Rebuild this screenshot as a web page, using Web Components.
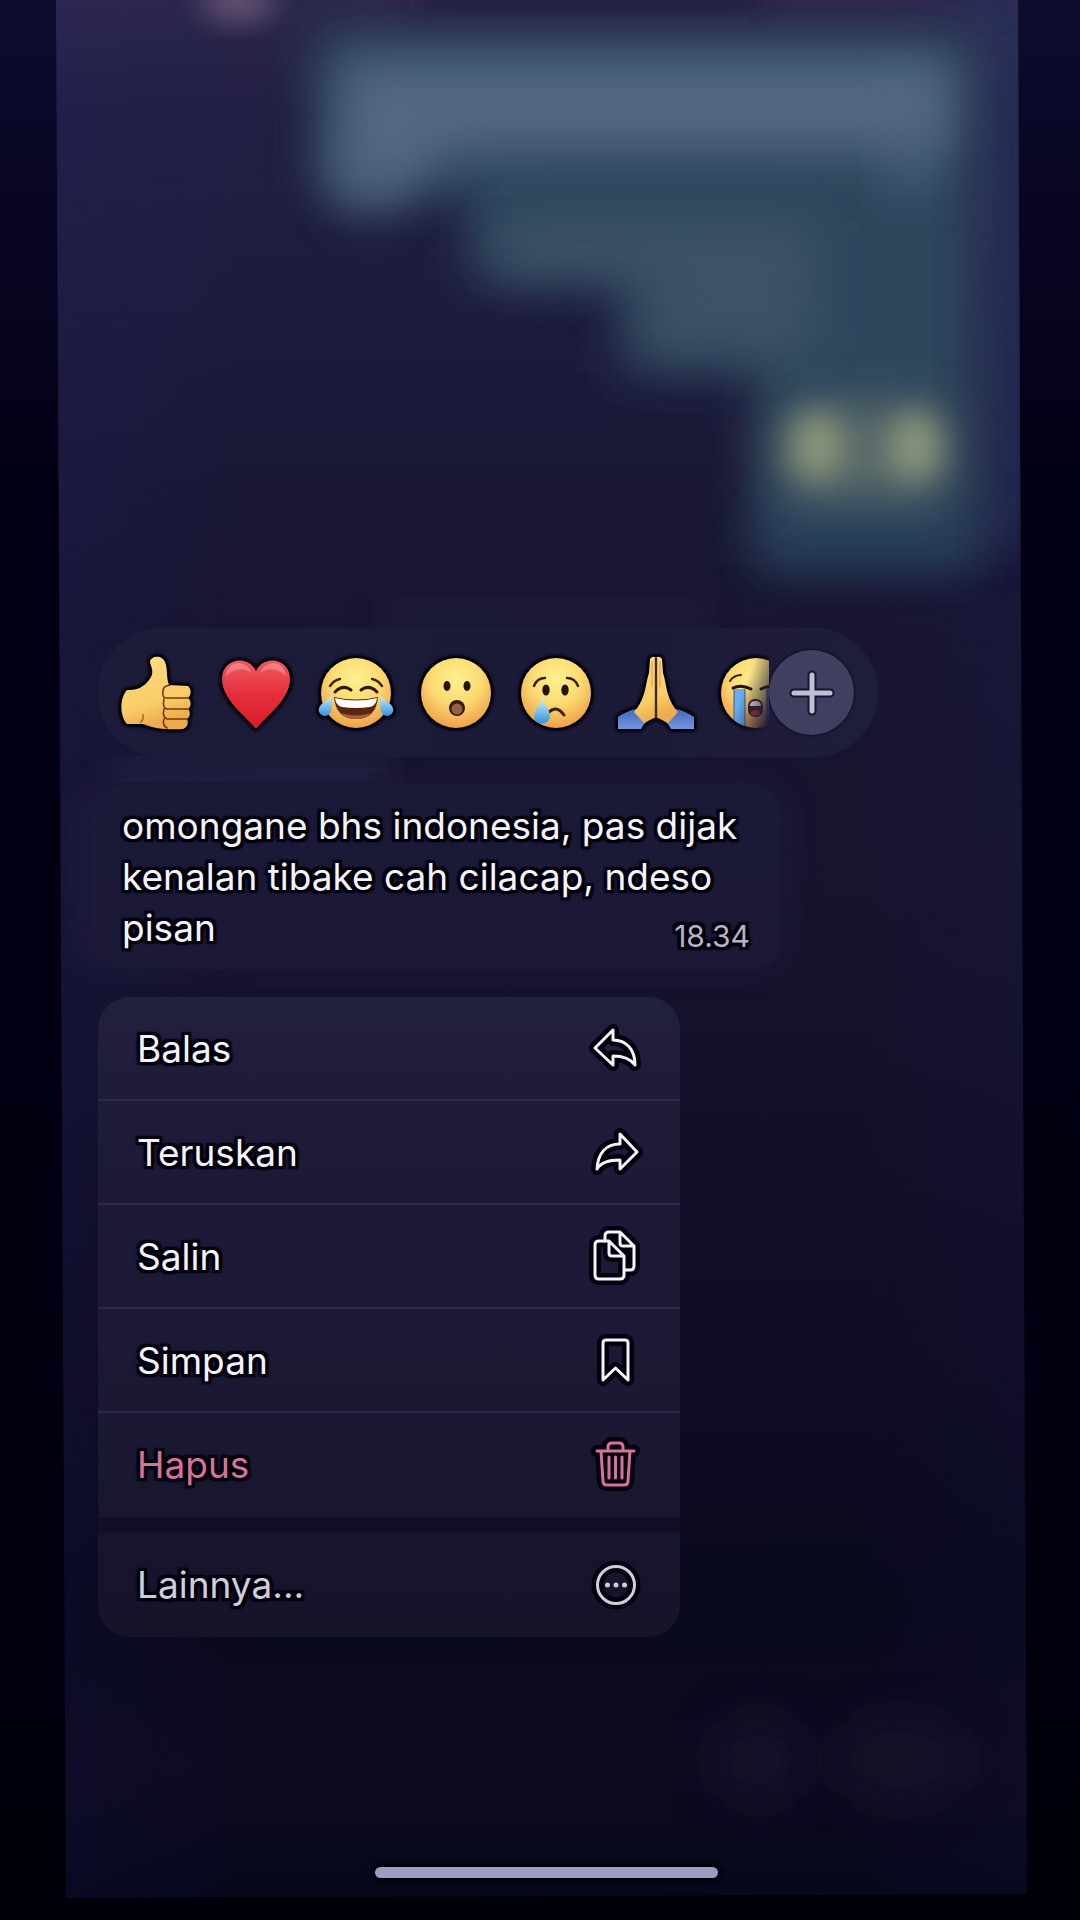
<!DOCTYPE html>
<html lang="id">
<head>
<meta charset="utf-8">
<meta name="viewport" content="width=device-width, initial-scale=1">
<title>Chat</title>
<style>
  html { background: #02000f; }
  body {
    margin: 0;
    min-height: 100vh;
    display: flex;
    background:
      linear-gradient(180deg, #0e0c2e 0, #070522 240px, #030014 480px, #010010 1400px, #00000a 100%);
    color: #f4f3fa;
    font-family: Inter, Roboto, "Liberation Sans", sans-serif;
    font-size: 37px;
    --halo: #02010d;
  }
</style>
</head>
<body>
<chat-screen>
  <reaction-bar></reaction-bar>
  <message-bubble time="18.34">omongane bhs indonesia, pas dijak kenalan tibake cah cilacap, ndeso pisan</message-bubble>
  <context-menu>
    <menu-item icon="reply">Balas</menu-item>
    <menu-item icon="forward">Teruskan</menu-item>
    <menu-item icon="copy">Salin</menu-item>
    <menu-item icon="bookmark">Simpan</menu-item>
    <menu-item icon="trash" danger>Hapus</menu-item>
    <menu-item icon="more" slot="extra">Lainnya...</menu-item>
  </context-menu>
</chat-screen>

<script>
const define = (name, markup, setup) => {
  const template = document.createElement('template');
  template.innerHTML = markup;
  customElements.define(name, class extends HTMLElement {
    constructor() {
      super();
      this.attachShadow({ mode: 'open' }).append(template.content.cloneNode(true));
    }
    connectedCallback() { if (setup) setup(this, this.shadowRoot); }
  });
};

const halo = 'text-shadow: 3px 0 1px var(--halo), -3px 0 1px var(--halo), 0 3px 1px var(--halo), 0 -3px 1px var(--halo), 3px 3px 1px var(--halo), -3px 3px 1px var(--halo), 3px -3px 1px var(--halo), -3px -3px 1px var(--halo), 0 0 5px var(--halo);';

/* Blurred conversation behind the overlay */
define('chat-backdrop', `
<style>
  :host { display: block; }
  svg { display: block; width: 100%; height: 100%; }
</style>
<svg viewBox="0 0 1080 1920" preserveAspectRatio="none" aria-hidden="true">
  <defs>
    <linearGradient id="base" x1="0" y1="0" x2="0" y2="1">
      <stop offset="0" stop-color="#2b274b"/><stop offset=".06" stop-color="#211f43"/>
      <stop offset=".2" stop-color="#1c1a3a"/><stop offset=".33" stop-color="#171531"/>
      <stop offset=".5" stop-color="#15132d"/><stop offset=".68" stop-color="#0f0d25"/>
      <stop offset=".84" stop-color="#09091d"/><stop offset=".92" stop-color="#0d0b20"/>
      <stop offset="1" stop-color="#06071b"/>
    </linearGradient>
    <linearGradient id="side" x1="0" y1="0" x2="1" y2="0">
      <stop offset="0" stop-color="#2420a0" stop-opacity=".1"/>
      <stop offset=".22" stop-color="#2420a0" stop-opacity="0"/>
      <stop offset=".8" stop-color="#2420a0" stop-opacity="0"/>
      <stop offset="1" stop-color="#2a2090" stop-opacity=".08"/>
    </linearGradient>
    <clipPath id="screen"><path d="M56 0H1018L1027 1894L66 1898Z"/></clipPath>
    <filter id="soft" x="-50%" y="-50%" width="200%" height="200%"><feGaussianBlur stdDeviation="15"/></filter>
    <filter id="softer" x="-50%" y="-50%" width="200%" height="200%"><feGaussianBlur stdDeviation="24"/></filter>
  </defs>
  <g clip-path="url(#screen)">
    <rect width="1080" height="1920" fill="url(#base)"/>
    <rect width="1080" height="1920" fill="url(#side)"/>
    <rect x="960" y="-20" width="80" height="560" fill="#2e3860" opacity=".5" filter="url(#softer)"/>
    <rect x="420" y="-30" width="340" height="45" fill="#1a1634" opacity=".7" filter="url(#soft)"/>
    <ellipse cx="238" cy="2" rx="38" ry="18" fill="#7d6385" opacity=".8" filter="url(#soft)"/>
    <path d="M316 34H975V565H755V372H620V282H470V195H316Z" fill="#2f465d" filter="url(#softer)"/>
    <path d="M340 60H950V150H455L405 190H340Z" fill="#536882" filter="url(#softer)"/>
    <ellipse cx="370" cy="180" rx="36" ry="40" fill="#516680" opacity=".5" filter="url(#softer)"/>
    <path d="M885 80H935V190H885Z" fill="#516683" opacity=".6" filter="url(#softer)"/>
    <path d="M500 220H815V352H650V275H500Z" fill="#40546b" opacity=".8" filter="url(#softer)"/>
    <rect x="765" y="500" width="215" height="65" fill="#22385a" opacity=".5" filter="url(#softer)"/>
    <rect x="780" y="405" width="168" height="95" rx="30" fill="#6e7a70" opacity=".7" filter="url(#softer)"/>
    <g fill="#959e7e" opacity=".85" filter="url(#soft)">
      <ellipse cx="817" cy="446" rx="25" ry="34"/>
      <ellipse cx="915" cy="446" rx="25" ry="34"/>
    </g>
    <rect x="380" y="604" width="330" height="18" fill="#29264a" opacity=".5" filter="url(#soft)"/>
    <rect x="110" y="762" width="280" height="14" fill="#34315a" opacity=".8" filter="url(#soft)"/>
    <rect x="74" y="784" width="712" height="186" rx="30" fill="#27244c" opacity=".4" filter="url(#soft)"/>
    <ellipse cx="760" cy="1760" rx="50" ry="45" fill="#1d1930" opacity=".5" filter="url(#softer)"/>
    <ellipse cx="900" cy="1760" rx="70" ry="45" fill="#1b162f" opacity=".5" filter="url(#softer)"/>
  </g>
</svg>`);

define('home-indicator', `
<style>
  :host {
    display: block; width: 343px; height: 11px; border-radius: 6px;
    background: #9a9dbf; box-shadow: 0 0 5px 4px #01000a;
  }
</style>`);

define('chat-screen', `
<style>
  :host {
    flex: 1; position: relative; display: flex; flex-direction: column;
    box-sizing: border-box; min-height: 100vh; padding: 628px 56px 42px 98px;
  }
  chat-backdrop { position: absolute; inset: 0; }
  main { position: relative; display: flex; flex-direction: column; align-items: flex-start; gap: 28px; }
  footer { position: relative; margin-top: auto; padding-right: 30px; display: flex; justify-content: center; }
  footer home-indicator { flex: none; }
</style>
<chat-backdrop></chat-backdrop>
<main><slot></slot></main>
<footer><home-indicator></home-indicator></footer>`);

const face = '<circle cx="40" cy="40" r="35" fill="url(#skin)"/>';
const emoji = {
  'Suka': `<path d="M34 9C34 3 46 1 49 9C52 16 50 24 53 32L72 33C76 36 75 43 72 45C76 48 75 54 72 56C75 59 74 64 71 66C73 70 71 75 67 76C54 77 39 76 27 71L11 71C4 64 3 46 11 37C23 38 30 32 35 24C38 18 35 14 34 9Z" fill="url(#hand)"/>
    <path d="M72 45H50Q46 45 47 38Q47 33 54 32M72 56H51Q46 55 48 46M71 66H51Q46 64 48 56M48 66Q46 72 51 75" fill="none" stroke="#6d3b12" stroke-width="1.6" stroke-linecap="round"/>
    <path d="M24 70Q28 67 27 61" fill="none" stroke="#a3641c" stroke-width="1.4"/>`,
  'Cinta': `<path d="M40 76C31 64 6 47 6 26C6 5 32 1 40 18C48 1 74 5 74 26C74 47 49 64 40 76Z" fill="url(#red)"/>
    <path d="M10 23C11 7 30 6 36 20C28 14 18 15 10 23ZM70 23C69 7 50 6 44 20C52 14 62 15 70 23Z" fill="#fff" opacity=".25"/>`,
  'Tertawa': face + `<path d="M14 33Q18 27 24 26M66 33Q62 27 56 26" fill="none" stroke="#3a2206" stroke-width="2.4" stroke-linecap="round"/>
    <path d="M19 39Q27 31 35 37M45 37Q53 31 61 39" fill="none" stroke="#2c1a06" stroke-width="3" stroke-linecap="round"/>
    <path d="M18 44Q40 49 62 44Q60 66 40 66Q20 66 18 44Z" fill="#5b2611"/>
    <path d="M19 45Q40 50 61 45Q60 53 54 54Q40 56 26 54Q20 53 19 45Z" fill="#fff"/>
    <path d="M25 60Q40 65 55 60Q50 66 40 66Q30 66 25 60Z" fill="#a5613c"/>
    <path d="M16 42C15 53 18 61 9 63C1 62 1 54 7 50C12 47 14 45 16 42ZM64 42C65 53 62 61 71 63C79 62 79 54 73 50C68 47 66 45 64 42Z" fill="url(#tear)"/>`,
  'Kaget': face + `<ellipse cx="31" cy="33" rx="3.5" ry="5" fill="#24130a"/><ellipse cx="51" cy="33" rx="3.5" ry="5" fill="#24130a"/>
    <circle cx="41" cy="55" r="8" fill="#351b0e"/><circle cx="41" cy="56" r="5.5" fill="#94633f"/>`,
  'Sedih': face + `<path d="M18 33Q21 25 29 25M51 25Q59 25 62 33" fill="none" stroke="#3a2206" stroke-width="2.4" stroke-linecap="round"/>
    <ellipse cx="30" cy="37" rx="3.7" ry="5.5" fill="#24130a"/><ellipse cx="49" cy="37" rx="3.7" ry="5.5" fill="#24130a"/>
    <path d="M33 59Q41 52 48 62" fill="none" stroke="#3a2206" stroke-width="3" stroke-linecap="round"/>
    <path d="M26 45C29 53 34 57 34 63C34 73 18 73 18 63C18 57 24 53 26 45Z" fill="url(#tear)"/>`,
  'Terima kasih': `<path d="M20 56C13 57 5 62 2 64V76H25Q28 70 32 68ZM60 56C67 57 75 62 78 64V76H55Q52 70 48 68Z" fill="url(#sleeve)"/>
    <path d="M40 64L28 70L18 59C30 46 29 32 33 20L34 6Q37 2 40 5Q43 2 46 6L47 20C51 32 50 46 62 59L52 70Z" fill="url(#hand)"/>
    <path d="M40 5V65" fill="none" stroke="#4a2608" stroke-width="2.4"/>
    <path d="M36 8V34M44 8V34" stroke="#d38b33" stroke-width=".8"/>`,
  'Menangis': face + `<path d="M14 28Q18 22 25 22M55 22Q62 22 66 28" fill="none" stroke="#3a2206" stroke-width="2" stroke-linecap="round"/>
    <path d="M18 36H29V73Q23 71 18 67ZM51 36H62V67Q57 71 51 73Z" fill="#68aef0"/><path d="M18 36V67M29 36V73M51 36V73" stroke="#2f5c9c" stroke-width="1"/>
    <path d="M17 35Q25 31 35 36M45 36Q55 31 63 35" fill="none" stroke="#24130a" stroke-width="3" stroke-linecap="round"/>
    <rect x="32" y="46" width="15" height="18" rx="7" fill="#4a1d16"/><path d="M34 53Q34 48 39.5 48Q45 48 45 53Z" fill="#fff"/><ellipse cx="39.5" cy="60" rx="4.5" ry="3" fill="#a14a44"/>`
};

define('reaction-button', `
<style>
  :host { display: block; flex: none; width: 100px; }
  button { all: unset; display: flex; justify-content: center; width: 100%; cursor: pointer; }
  svg { display: block; width: 80px; height: 80px; overflow: visible;
    filter: drop-shadow(0 0 1px #02010d) drop-shadow(0 0 1px #02010d) drop-shadow(0 0 1px #02010d) drop-shadow(0 0 1px #02010d) drop-shadow(0 0 1px #02010d); }
</style>
<button type="button"></button>`, (host, root) => {
  const name = host.getAttribute('name');
  const button = root.querySelector('button');
  button.setAttribute('aria-label', name);
  button.innerHTML = `<svg viewBox="0 0 80 80" aria-hidden="true"><defs>
    <radialGradient id="skin" cx=".5" cy=".3" r=".72"><stop offset="0" stop-color="#fef08e"/><stop offset=".5" stop-color="#fcda72"/><stop offset="1" stop-color="#ee9c45"/></radialGradient>
    <linearGradient id="hand" x1="0" y1="0" x2=".3" y2="1"><stop offset="0" stop-color="#fddd82"/><stop offset=".7" stop-color="#f9cd68"/><stop offset="1" stop-color="#edac4b"/></linearGradient>
    <linearGradient id="red" x1="0" y1="0" x2="0" y2="1"><stop offset="0" stop-color="#ee5a63"/><stop offset=".5" stop-color="#e42f3b"/><stop offset="1" stop-color="#d81d2d"/></linearGradient>
    <linearGradient id="tear" x1="0" y1="0" x2="0" y2="1"><stop offset="0" stop-color="#d3effc"/><stop offset="1" stop-color="#2f95e0"/></linearGradient>
    <linearGradient id="sleeve" x1="0" y1="0" x2="0" y2="1"><stop offset="0" stop-color="#3f68bd"/><stop offset="1" stop-color="#7596dc"/></linearGradient>
  </defs>${emoji[name]}</svg>`;
});

define('reaction-bar', `
<style>
  :host {
    display: flex; align-items: center; box-sizing: border-box;
    width: 100%; max-width: 780px; height: 129px; padding: 0 24px 0 8px; border-radius: 65px;
    background: linear-gradient(90deg, #1c1b39, #1b1a37 70%, #1f1d3c);
    box-shadow: 0 0 1px #2a2848;
  }
  div {
    flex: 1; min-width: 0; display: flex; overflow: hidden; padding: 8px 0;
    -webkit-mask-image: linear-gradient(110deg, #000 calc(100% - 42px), transparent calc(100% - 6px));
    mask-image: linear-gradient(110deg, #000 calc(100% - 42px), transparent calc(100% - 6px));
  }
  .add {
    flex: none; display: grid; place-items: center; width: 85px; height: 85px;
    padding: 0; border: 0; border-radius: 50%; background: #403f60;
    box-shadow: 0 0 2px 1px #0f0d25; cursor: pointer;
  }
  svg { display: block; width: 48px; height: 48px; }
</style>
<div>${Object.keys(emoji).map(n => `<reaction-button name="${n}"></reaction-button>`).join('')}</div>
<button class="add" type="button" aria-label="Tambah reaksi">
  <svg viewBox="0 0 48 48" fill="none" stroke-linecap="round" aria-hidden="true">
    <path d="M24 6V42M6 24H42" stroke="#17152e" stroke-width="9"/>
    <path d="M24 6V42M6 24H42" stroke="#c0bfd6" stroke-width="5"/>
  </svg>
</button>`);

define('message-bubble', `
<style>
  :host {
    display: block; box-sizing: border-box; width: 100%; max-width: 682px;
    padding: 15px 30px 16px 24px; border-radius: 28px;
    background: linear-gradient(180deg, #1a1938, #1b1936);
    line-height: 51px; ${halo}
  }
  p { margin: 0; display: flow-root; }
  time { float: right; margin-top: 18px; font-size: 30px; line-height: 32px; color: #b5b3c6; }
</style>
<p><slot></slot><time></time></p>`, (host, root) => {
  root.querySelector('time').textContent = host.getAttribute('time');
});

define('context-menu', `
<style>
  :host {
    display: flex; flex-direction: column; gap: 16px; width: 100%; max-width: 582px;
    border-radius: 32px; overflow: hidden; background: #110e26;
  }
  section { display: flex; flex-direction: column; }
  .main { background: linear-gradient(180deg, #22203f 0, #1d1b38 110px, #1c1936 320px, #19172f 100%); }
  .extra { background: linear-gradient(180deg, #17142d, #161329); }
</style>
<section class="main"><slot></slot></section>
<section class="extra"><slot name="extra"></slot></section>`);

const icons = {
  reply: '<path d="M3 24L21 6V16C34 16 43 25 43 41C38 34 31 32 21 32V41Z"/>',
  forward: '<path d="M45 24L28 6V16C14 16 6 25 5 41C9 34 17 32 28 32V41Z"/>',
  copy: '<path d="M13 9V4Q13 0 17 0H28L42 14V34Q42 38 38 38H33M28 0V11Q28 14 31 14H42"/><path d="M17 9H7Q3 9 3 13V43Q3 47 7 47H28Q32 47 32 43V24ZM17 9V21Q17 24 20 24H32"/>',
  bookmark: '<path d="M11 7Q11 4 14 4H33Q36 4 36 7V44L23.5 32L11 44Z"/>',
  trash: '<path d="M5 11H42M16 11V7Q16 3 20 3H27Q31 3 31 7V11M9 11L11 41Q11 45 15 45H32Q36 45 36 41L38 11M17 17V38M23.5 17V38M30 17V38"/>',
  more: '<circle cx="24" cy="25" r="18.5"/><path stroke-width="5" d="M15.5 25h.01M24 25h.01M32.5 25h.01"/>'
};

define('menu-item', `
<style>
  :host { display: block; color: #f4f3fa; }
  :host([danger]) { color: #d87398; }
  :host([slot="extra"]) { color: #cfcddd; }
  button {
    all: unset; box-sizing: border-box; width: 100%; height: 104px; padding: 0 40px 0 39px;
    display: flex; align-items: center; justify-content: space-between;
    border-bottom: 2px solid #2c2a48; cursor: pointer; ${halo}
  }
  :host([danger]) button, :host([slot="extra"]) button { border-bottom-color: transparent; }
  svg { display: block; width: 48px; height: 48px; overflow: visible; fill: none; stroke-linecap: round; stroke-linejoin: round; }
  .back { stroke: var(--halo); stroke-width: 12px; }
  .line { stroke: currentColor; stroke-width: 3px; }
</style>
<button type="button"><span><slot></slot></span><svg viewBox="0 0 48 48" aria-hidden="true"><g class="back"></g><g class="line"></g></svg></button>`,
(host, root) => {
  const shape = icons[host.getAttribute('icon')];
  root.querySelector('.back').innerHTML = shape;
  root.querySelector('.line').innerHTML = shape;
});
</script>
</body>
</html>
